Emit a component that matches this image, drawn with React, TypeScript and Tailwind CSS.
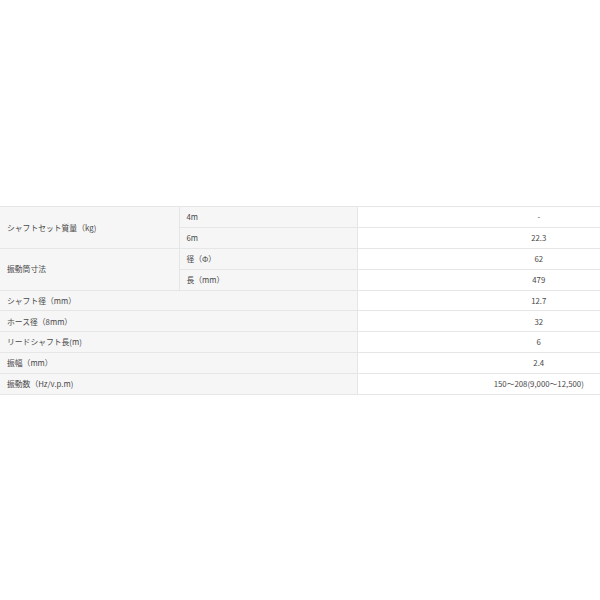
const font = { fontFamily: '"Noto Sans CJK JP", "Noto Sans", sans-serif' };

type Row = { label: string; sub?: string; value: string; span?: number; skipLabel?: boolean };

const rows: Row[] = [
  { label: 'シャフトセット質量（kg)', sub: '4m', value: '-', span: 2 },
  { label: '', sub: '6m', value: '22.3', skipLabel: true },
  { label: '振動筒寸法', sub: '径（Φ）', value: '62', span: 2 },
  { label: '', sub: '長（mm）', value: '479', skipLabel: true },
  { label: 'シャフト径（mm）', value: '12.7' },
  { label: 'ホース径（8mm）', value: '32' },
  { label: 'リードシャフト長(m)', value: '6' },
  { label: '振幅（mm）', value: '2.4' },
  { label: '振動数（Hz/v.p.m)', value: '150～208(9,000～12,500)' },
];

export default function App() {
  return (
    <div className="w-[600px] h-[600px] bg-white overflow-hidden" style={font}>
      <div className="h-[206px]" />
      <table className="w-[600px] border-collapse table-fixed text-[7.8px] text-[#484848]">
        <colgroup>
          <col className="w-[179px]" />
          <col className="w-[178px]" />
          <col />
        </colgroup>
        <tbody>
          {rows.map((r, i) => (
            <tr key={i} className="h-[20.9px]">
              {!r.skipLabel && (
                <td
                  rowSpan={r.span ?? 1}
                  colSpan={r.sub ? 1 : 2}
                  className="bg-[#f6f6f6] border-y border-r border-[#e6e6e6] pl-[7px] align-middle"
                >
                  {r.label}
                </td>
              )}
              {r.sub && (
                <td className="bg-[#f6f6f6] border-y border-r border-[#e6e6e6] pl-[7px] align-middle">
                  {r.sub}
                </td>
              )}
              <td className="border-y border-[#e6e6e6] pl-[120px] text-center align-middle">{r.value}</td>
            </tr>
          ))}
        </tbody>
      </table>
    </div>
  );
}
